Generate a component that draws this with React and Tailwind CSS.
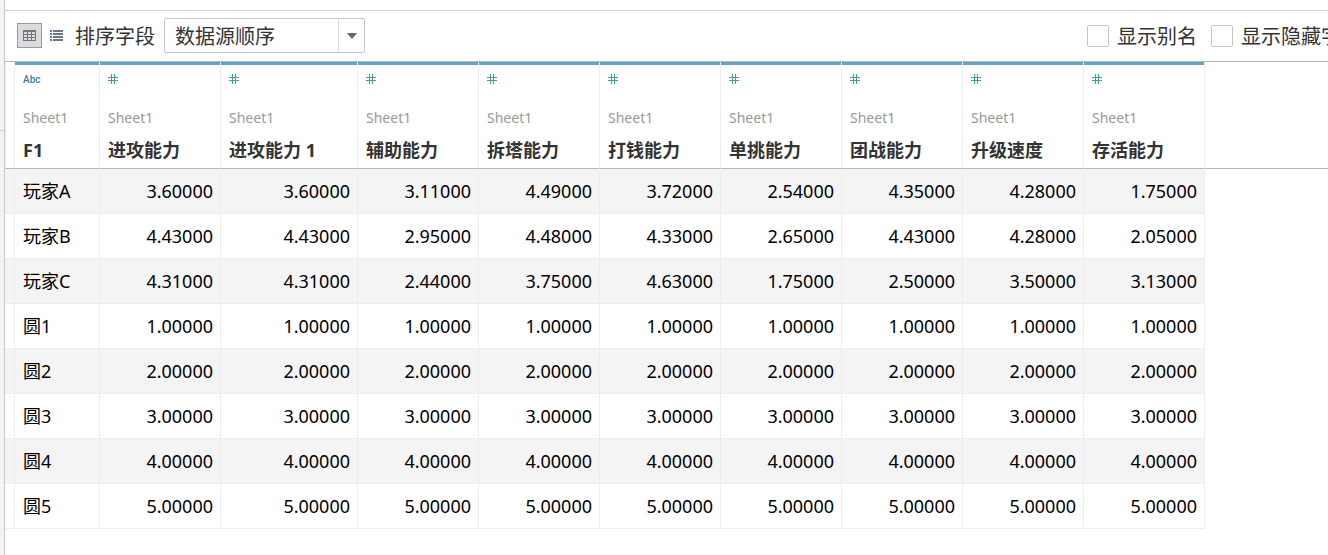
import React from 'react'

const columns = [
  { name: 'F1', text: true },
  { name: '进攻能力' },
  { name: '进攻能力 1' },
  { name: '辅助能力' },
  { name: '拆塔能力' },
  { name: '打钱能力' },
  { name: '单挑能力' },
  { name: '团战能力' },
  { name: '升级速度' },
  { name: '存活能力' },
]

const rows = [
  ['玩家A', '3.60000', '3.60000', '3.11000', '4.49000', '3.72000', '2.54000', '4.35000', '4.28000', '1.75000'],
  ['玩家B', '4.43000', '4.43000', '2.95000', '4.48000', '4.33000', '2.65000', '4.43000', '4.28000', '2.05000'],
  ['玩家C', '4.31000', '4.31000', '2.44000', '3.75000', '4.63000', '1.75000', '2.50000', '3.50000', '3.13000'],
  ['圆1', ...Array(9).fill('1.00000')],
  ['圆2', ...Array(9).fill('2.00000')],
  ['圆3', ...Array(9).fill('3.00000')],
  ['圆4', ...Array(9).fill('4.00000')],
  ['圆5', ...Array(9).fill('5.00000')],
]

const GridIcon = () => (
  <svg width="13" height="11" viewBox="0 0 13 11" fill="none" stroke="#6b778d" shapeRendering="crispEdges">
    <path d="M0.5 0.5h12v10h-12z M0 1.5h13 M0 4.5h13 M0 7.5h13 M4.5 1v10 M8.5 1v10" />
  </svg>
)

const ListIcon = () => (
  <svg width="13" height="11" viewBox="0 0 13 11" fill="#6b778d" shapeRendering="crispEdges">
    <path d="M0 0h2v2H0z M0 3h2v2H0z M0 6h2v2H0z M0 9h2v2H0z" />
    <path d="M3 0h10v2H3z M3 3h10v2H3z M3 6h10v2H3z M3 9h10v2H3z" />
  </svg>
)

const NumberIcon = () => (
  <svg width="10" height="10" viewBox="0 0 10 10" fill="none" stroke="#3fa581" shapeRendering="crispEdges">
    <path d="M3.5 0v10 M6.5 0v10 M0 3.5h10 M0 6.5h10" />
  </svg>
)

const CheckOption = ({ id, label }) => (
  <div className="flex items-center gap-2">
    <input
      id={id}
      type="checkbox"
      className="size-[22px] appearance-none rounded-xs border border-[#c6c6c6] bg-white checked:bg-[#5fa4c6]"
    />
    <label htmlFor={id} className="pt-0.5 whitespace-nowrap">{label}</label>
  </div>
)

const Toolbar = () => (
  <div className="flex h-[52px] items-center border-y border-t-[#d0d0d0] border-b-[#b8b8b8] pb-px pl-3 text-[20px] text-[#333]">
    <button type="button" aria-label="网格视图" className="flex size-[25px] items-center justify-center border border-[#999] bg-[#dcdcdc]">
      <GridIcon />
    </button>
    <button type="button" aria-label="列表视图" className="flex h-[25px] w-7 items-center justify-center">
      <ListIcon />
    </button>
    <label htmlFor="sort" className="ml-[5px] pt-0.5 whitespace-nowrap">排序字段</label>
    <div className="relative ml-[9px] w-[201px] shrink-0">
      <select id="sort" className="block h-[35px] w-full appearance-none rounded-xs border border-[#c6c6c6] bg-white pt-0.5 pl-[10px]">
        <option>数据源顺序</option>
      </select>
      <div className="pointer-events-none absolute inset-y-px right-px flex w-[26px] items-center justify-center border-l border-[#dcdcdc]">
        <svg width="10" height="6" viewBox="0 0 10 6" fill="#666">
          <path d="M0 0h10L5 6z" />
        </svg>
      </div>
    </div>
    <div className="-mr-[33px] ml-auto flex shrink-0 gap-[14px]">
      <CheckOption id="alias" label="显示别名" />
      <CheckOption id="hidden" label="显示隐藏字段" />
    </div>
  </div>
)

const HeaderCell = ({ column }) => (
  <th className="border-r border-b border-r-[#ededed] border-b-[#b8b8b8] p-0 text-left align-top">
    <div className="h-[3px] bg-[#5fa4c6]" />
    <div className="px-2 whitespace-nowrap">
      <div className="flex h-7 items-center">
        {column.text ? (
          <span className="font-['Roboto','Noto_Sans',sans-serif] text-[10px] font-medium text-[#38809f]">Abc</span>
        ) : (
          <NumberIcon />
        )}
      </div>
      <div className="mt-3 h-6 pt-px text-[14px] leading-6 font-normal text-[#999]">Sheet1</div>
      <div className="mt-2 h-6 pt-px text-[18px] leading-6 font-bold text-[#333]">{column.name}</div>
    </div>
  </th>
)

const DataTable = () => (
  <table className="w-full table-fixed border-separate border-spacing-0">
    <colgroup>
      <col className="w-[10px]" />
      <col className="w-[85px]" />
      <col className="w-[121px]" />
      <col className="w-[137px]" />
      <col className="w-[121px]" span={7} />
      <col />
    </colgroup>
    <thead>
      <tr className="h-[107px]">
        <td className="border-x border-b border-x-[#ededed] border-b-[#b8b8b8]" />
        {columns.map((column) => (
          <HeaderCell key={column.name} column={column} />
        ))}
        <td className="border-b border-[#b8b8b8]" />
      </tr>
    </thead>
    <tbody className="text-[18px] text-black">
      {rows.map((row) => (
        <tr key={row[0]} className="group h-[45px]">
          <td className="border-r border-b border-[#ededed] p-0 group-odd:bg-[#f4f4f4]" />
          {row.map((value, i) => (
            <td
              key={i}
              className="border-r border-b border-[#ededed] px-[7px] py-0 text-right group-odd:bg-[#f4f4f4] nth-2:pl-2 nth-2:text-left"
            >
              {value}
            </td>
          ))}
          <td />
        </tr>
      ))}
    </tbody>
  </table>
)

const App = () => {
  return (
    <div className="flex min-h-screen overflow-hidden bg-white font-['Noto_Sans','Noto_Sans_CJK_SC',sans-serif]">
      {/* Edge of the side panel */}
      <div className="w-[5px] shrink-0 border-r border-[#c8c8c8] bg-[#f3f3f3]">
        <div className="h-[131px] border-b border-[#d0d0d0]" />
      </div>
      <main className="min-w-0 flex-1 pt-[10px]">
        <Toolbar />
        <DataTable />
      </main>
    </div>
  )
}

export default App
